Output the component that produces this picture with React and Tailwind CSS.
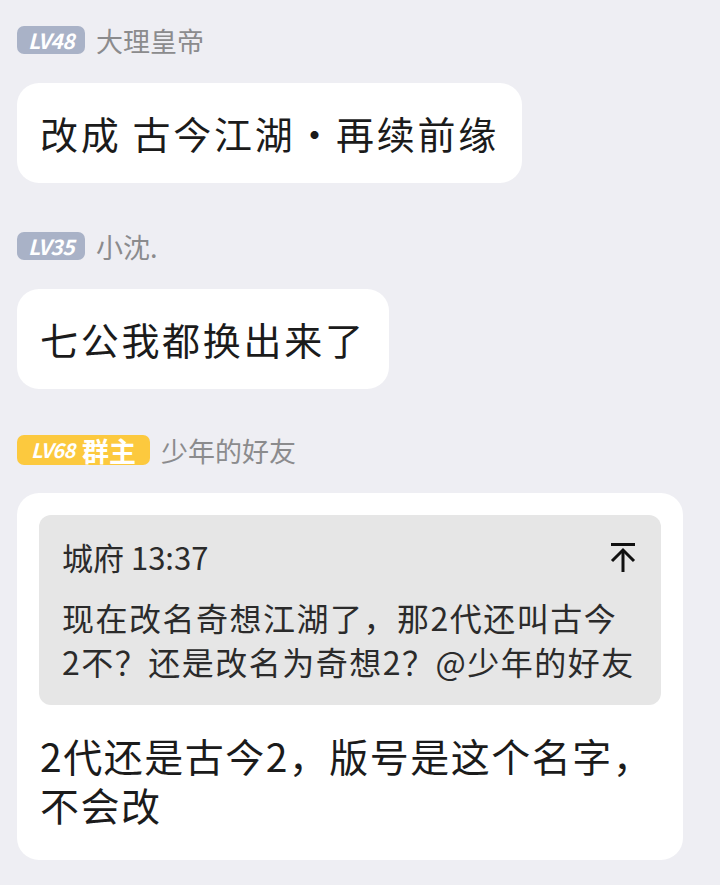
import React from "react";

const FONT = { fontFamily: '"Noto Sans CJK SC", "Noto Sans", sans-serif' };

function Badge({ level, owner }) {
  if (owner) {
    return (
      <span className="inline-flex h-[30px] w-[133px] items-center justify-center gap-[7px] rounded-[7px] bg-[#fcc93e] text-white">
        <span className="text-[20px] font-bold italic leading-none tracking-[-0.5px]">LV{level}</span>
        <span className="text-[27px] font-bold leading-none">群主</span>
      </span>
    );
  }
  return (
    <span className="inline-flex h-[28px] w-[68px] items-center justify-center rounded-[7px] bg-[#a9b2c7] text-[21px] font-bold italic leading-none tracking-[-0.5px] text-white">
      LV{level}
    </span>
  );
}

function Header({ level, owner, name }) {
  return (
    <div className="flex h-[30px] items-center gap-[11px]">
      <Badge level={level} owner={owner} />
      <span className="text-[27px] leading-none text-[#8b8b8d]">{name}</span>
    </div>
  );
}

function PinIcon() {
  return (
    <svg width="30" height="32" viewBox="0 0 30 32" fill="none" stroke="#111" strokeWidth="3">
      <path d="M3 3.5H27" />
      <path d="M15 9V31" />
      <path d="M4 20L15 9L26 20" />
    </svg>
  );
}

export default function App() {
  return (
    <div className="min-h-[885px] w-[720px] bg-[#eeeef3] px-[17px] pt-[25px]" style={FONT}>
      <Header level="48" name="大理皇帝" />
      <div className="mt-[28px] inline-block rounded-[22px] bg-white px-[23px] py-[26px] text-[38px] leading-[48px] tracking-[2.7px] text-[#1b1b1b]">
        改成 古今江湖・再续前缘
      </div>

      <div className="mt-[48px]">
        <Header level="35" name="小沈." />
      </div>
      <div className="mt-[28px] inline-block rounded-[22px] bg-white px-[23px] py-[26px] text-[38px] leading-[48px] tracking-[2.7px] text-[#1b1b1b]">
        七公我都换出来了
      </div>

      <div className="mt-[46px]">
        <Header level="68" owner name="少年的好友" />
      </div>
      <div className="mt-[28px] w-[666px] rounded-[22px] bg-white px-[22px] pb-[31px] pt-[22px]">
        <div className="rounded-[12px] bg-[#e6e6e6] px-[23px] pb-[22px] pt-[20px] text-[#2b2b2b]">
          <div className="flex items-center justify-between">
            <span className="text-[31px] leading-[44px]">城府 13:37</span>
            <PinIcon />
          </div>
          <p className="mt-[16px] text-[32px] leading-[44px] tracking-[1.5px]">
            现在改名奇想江湖了，那2代还叫古今
            <br />
            2不？还是改名为奇想2？@少年的好友
          </p>
        </div>
        <p className="mt-[26px] pl-[1px] text-[39px] leading-[49px] tracking-[1.5px] text-[#1b1b1b]">
          2代还是古今2，版号是这个名字，不会改
        </p>
      </div>
    </div>
  );
}
